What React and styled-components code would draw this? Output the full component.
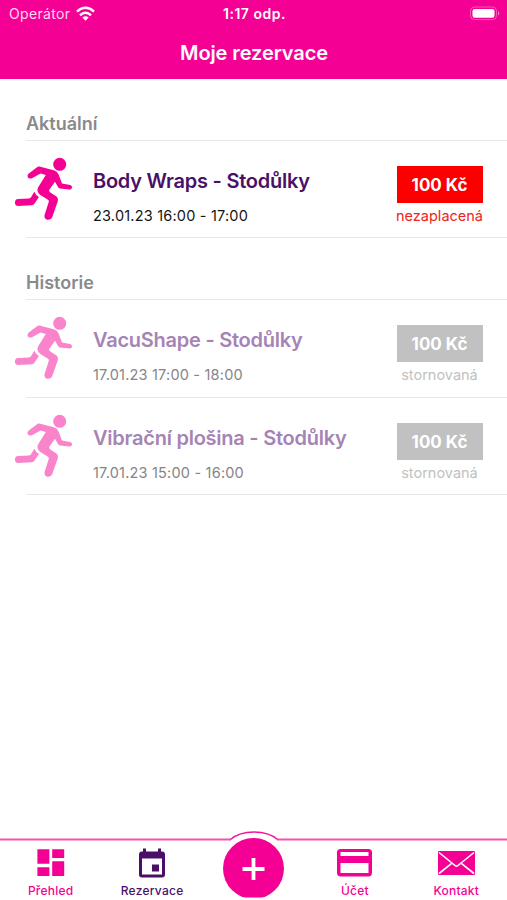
import React from 'react'
import styled, { createGlobalStyle } from 'styled-components'

const current = [
    { name: 'Body Wraps - Stodůlky', time: '23.01.23 16:00 - 17:00', price: '100 Kč', status: 'nezaplacená' },
]

const history = [
    { name: 'VacuShape - Stodůlky', time: '17.01.23 17:00 - 18:00', price: '100 Kč', status: 'stornovaná' },
    { name: 'Vibrační plošina - Stodůlky', time: '17.01.23 15:00 - 16:00', price: '100 Kč', status: 'stornovaná' },
]

const Runner = () => (
    <svg width="60" height="66" viewBox="14 156 60 66" fill="currentColor">
        <circle cx="59.7" cy="164.3" r="6.5" />
        <path d="M39.3 166.6 L53.8 170.2 Q57.3 171.3 58.6 174.5 L62 183.4 L70.2 185 Q72.4 185.8 72 187.7 Q71.4 189.7 69.4 189.6 L60 188.6 Q58.6 188.3 58 187 L55 181.8 L49.3 189.8 Q48.6 191 50 192.2 L56.8 196.8 Q58.6 198.5 57.8 201.3 L52.2 217.2 Q50.8 220.3 47.4 219.8 Q44 218.7 44.5 215.2 L48.8 201.8 Q49.2 200.6 48 199.8 L40 194.8 Q36 191.2 38.2 187.3 L45.8 174.9 L40.6 173.4 L31.5 178.4 Q28.7 179.2 27.6 177 Q27 174.9 28.8 173.6 L37 167.3 Q38 166.4 39.3 166.6 Z" />
        <path d="M34.3 191.8 Q35.8 195.2 38.9 197 L34.6 203.6 Q33.5 205.2 31.8 205.3 L18 206 Q15 205.6 14.9 202.5 Q15 199.3 18 198.9 L29 198.5 Q30.4 198.4 31.2 197 Z" />
    </svg>
)

const WifiIcon = () => (
    <svg width="19" height="15" viewBox="0 0 19 15" fill="none" stroke="#fff" strokeWidth="2.5">
        <path d="M1 5.6 Q9.5 -2 18 5.6" />
        <path d="M4 9.2 Q9.5 4.3 15 9.2" />
        <path d="M9.5 14.7 L6.3 11.5 Q9.5 8.9 12.7 11.5 Z" fill="#fff" stroke="none" />
    </svg>
)

const BatteryIcon = () => (
    <svg width="31" height="15" viewBox="0 0 31 15" fill="none">
        <rect x="1.5" y="1" width="26" height="12.6" rx="4" stroke="#fff" strokeOpacity=".35" />
        <rect x="3.5" y="3" width="22" height="8.8" rx="2.2" fill="#fff" />
        <path d="M29 5 Q31.5 7.3 29 9.6 Z" fill="#fff" fillOpacity=".5" />
    </svg>
)

const OverviewIcon = () => (
    <svg width="28" height="28" viewBox="0 0 28 28" fill="currentColor">
        <path d="M.4.3h12v14.5H.4zM15.2.3h12v8.8h-12zM.4 18.2h12v8.8H.4zM15.2 12.2h12V27h-12z" />
    </svg>
)

const CalendarIcon = () => (
    <svg width="26" height="30" viewBox="0 0 26 30" fill="currentColor">
        <path fillRule="evenodd" d="M4 .5h3v3h12v-3h3v3h1q3 0 3 3v20q0 3-3 3H3q-3 0-3-3v-20q0-3 3-3h1zM3 10.5v16h20v-16z" />
        <path d="M13 16.5h7v7h-7z" />
    </svg>
)

const CardIcon = () => (
    <svg width="35" height="28" viewBox="0 0 35 28" fill="currentColor">
        <path fillRule="evenodd" d="M3.5 0h28Q35 0 35 3.5v20q0 4-3.5 4h-28Q0 27.5 0 23.5v-20Q0 0 3.5 0zM3.5 3v4h28V3zM3.5 14v10h28V14z" />
    </svg>
)

const MailIcon = () => (
    <svg width="37" height="24" viewBox="0 0 37 24" fill="none">
        <rect width="37" height="24" rx="1" fill="currentColor" />
        <path d="M1 1.5 L17 14.5 Q18.5 15.8 20 14.5 L36 1.5 M1 22.5 L14 12.2 M36 22.5 L23 12.2" stroke="#fff" strokeWidth="1.6" />
    </svg>
)

const Reservation = ({ item, past }) => (
    <Row $past={past}>
        <RunnerBox><Runner /></RunnerBox>
        <Info>
            <Name>{item.name}</Name>
            <Time>{item.time}</Time>
        </Info>
        <Payment>
            <Price $past={past}>{item.price}</Price>
            <Status $past={past}>{item.status}</Status>
        </Payment>
    </Row>
)

export default function App() {
    return (
        <Screen>
            <GlobalStyle />
            <Header>
                <StatusBar>
                    <Carrier>Operátor <WifiIcon /></Carrier>
                    <Clock>1:17 odp.</Clock>
                    <Battery><BatteryIcon /></Battery>
                </StatusBar>
                <Title>Moje rezervace</Title>
            </Header>

            <Content>
                <Section>
                    <SectionHead>Aktuální</SectionHead>
                    {current.map((item) => <Reservation key={item.name} item={item} />)}
                </Section>
                <Section>
                    <SectionHead>Historie</SectionHead>
                    {history.map((item) => <Reservation key={item.name} item={item} past />)}
                </Section>
            </Content>

            {/* Bottom navigation */}
            <Nav>
                <NavOutline viewBox="0 0 507 12" fill="none" stroke="#f4149b">
                    <path d="M0 9.5 H231 M277 9.5 H507" strokeWidth="2" strokeOpacity=".75" />
                    <path d="M230.5 9.5 C242 -.5 266 -.5 277.5 9.5" strokeWidth="1.3" />
                </NavOutline>
                <NavItem><IconBox><OverviewIcon /></IconBox><Label>Přehled</Label></NavItem>
                <NavItem $active><IconBox><CalendarIcon /></IconBox><Label>Rezervace</Label></NavItem>
                <AddButton>
                    <svg width="24" height="24" viewBox="0 0 24 24" stroke="#fff" strokeWidth="3.8">
                        <path d="M12.5 1v22M1.5 12h22" />
                    </svg>
                </AddButton>
                <NavItem><IconBox><CardIcon /></IconBox><Label>Účet</Label></NavItem>
                <NavItem><IconBox><MailIcon /></IconBox><Label>Kontakt</Label></NavItem>
            </Nav>
        </Screen>
    )
}

const GlobalStyle = createGlobalStyle`
    body {
        margin: 0;
        background: #fff;
    }
    * {
        box-sizing: border-box;
    }
    svg {
        display: block;
        flex: none;
    }
`

const Screen = styled.div`
    display: flex;
    flex-direction: column;
    height: 100vh;
    overflow: hidden;
    background: #fff;
    font-family: Inter, 'Liberation Sans', sans-serif;
`

const Header = styled.header`
    height: 79px;
    background: #f50094;
    color: #fff;
`

const StatusBar = styled.div`
    display: grid;
    grid-template-columns: 1fr auto 1fr;
    align-items: center;
    height: 27px;
    padding: 0 7px 0 9px;
    font-size: 14px;
    letter-spacing: 0.35px;
`

const Carrier = styled.div`
    display: flex;
    align-items: center;
    gap: 6px;
    color: #ffd9f0;
`

const Clock = styled.div`
    font-weight: 600;
    letter-spacing: 0.5px;
`

const Battery = styled.div`
    display: flex;
    justify-content: flex-end;
`

const Title = styled.h1`
    margin: 0;
    padding-left: 1px;
    font-size: 20px;
    font-weight: 600;
    line-height: 52px;
    letter-spacing: -0.1px;
    text-align: center;
`

const Content = styled.main`
    flex: 1;
`

const Section = styled.section`
    padding-left: 26px;
`

const SectionHead = styled.h2`
    display: flex;
    align-items: flex-end;
    height: 62px;
    margin: 0;
    padding-bottom: 4px;
    border-bottom: 1px solid #e8e8e8;
    color: #8a8a8a;
    font-size: 18px;
    font-weight: 600;
    line-height: 24px;
`

const Row = styled.article`
    display: flex;
    height: ${({ $past }) => ($past ? '97.5px' : '97px')};
    border-bottom: 1px solid #e8e8e8;
    color: ${({ $past }) => ($past ? '#a584b5' : '#4a1068')};
    --runner: ${({ $past }) => ($past ? '#fa84cc' : '#f50094')};
    --time: ${({ $past }) => ($past ? '#858585' : '#151515')};
`

const RunnerBox = styled.div`
    width: 79px;
    margin-left: -12px;
    padding-top: 15px;
    color: var(--runner);
`

const Info = styled.div`
    flex: 1;
    padding-top: 26px;
`

const Name = styled.div`
    font-size: 20px;
    font-weight: 600;
    line-height: 28px;
    letter-spacing: -0.25px;
    white-space: nowrap;
`

const Time = styled.div`
    margin-top: 11px;
    color: var(--time);
    font-size: 14.5px;
    line-height: 20px;
    letter-spacing: 0.2px;
`

const Payment = styled.div`
    display: flex;
    flex-direction: column;
    align-items: center;
    width: 86px;
    margin-right: 24.5px;
    padding-top: 25px;
`

const Price = styled.div`
    width: 86px;
    height: 37px;
    background: ${({ $past }) => ($past ? '#c1c1c1' : '#fc0000')};
    color: #fff;
    font-size: 17px;
    font-weight: 700;
    line-height: 38px;
    text-align: center;
`

const Status = styled.div`
    margin-top: 3px;
    color: ${({ $past }) => ($past ? '#c1c1c1' : '#e92525')};
    font-size: 14.5px;
    line-height: 20px;
`

const Nav = styled.nav`
    position: relative;
    display: grid;
    grid-template-columns: repeat(5, 1fr);
    height: 70px;
    background: #fff;
`

const NavOutline = styled.svg`
    position: absolute;
    top: 0;
    left: 0;
    width: 507px;
    height: 12px;
`

const NavItem = styled.div`
    display: flex;
    flex-direction: column;
    align-items: center;
    padding-top: 17px;
    color: ${({ $active }) => ($active ? '#4a1068' : '#f50094')};
`

const IconBox = styled.div`
    display: flex;
    align-items: center;
    height: 32px;
`

const Label = styled.div`
    margin-top: 4px;
    font-size: 12px;
    font-weight: 500;
    line-height: 16px;
    letter-spacing: 0.25px;
`

const AddButton = styled.div`
    display: flex;
    align-items: center;
    justify-content: center;
    justify-self: center;
    width: 61px;
    height: 61px;
    margin-top: 8px;
    border-radius: 50%;
    background: #f50094;
    /* the button is cut flat at its lower edge */
    clip-path: inset(0 0 1.5px 0);
`
